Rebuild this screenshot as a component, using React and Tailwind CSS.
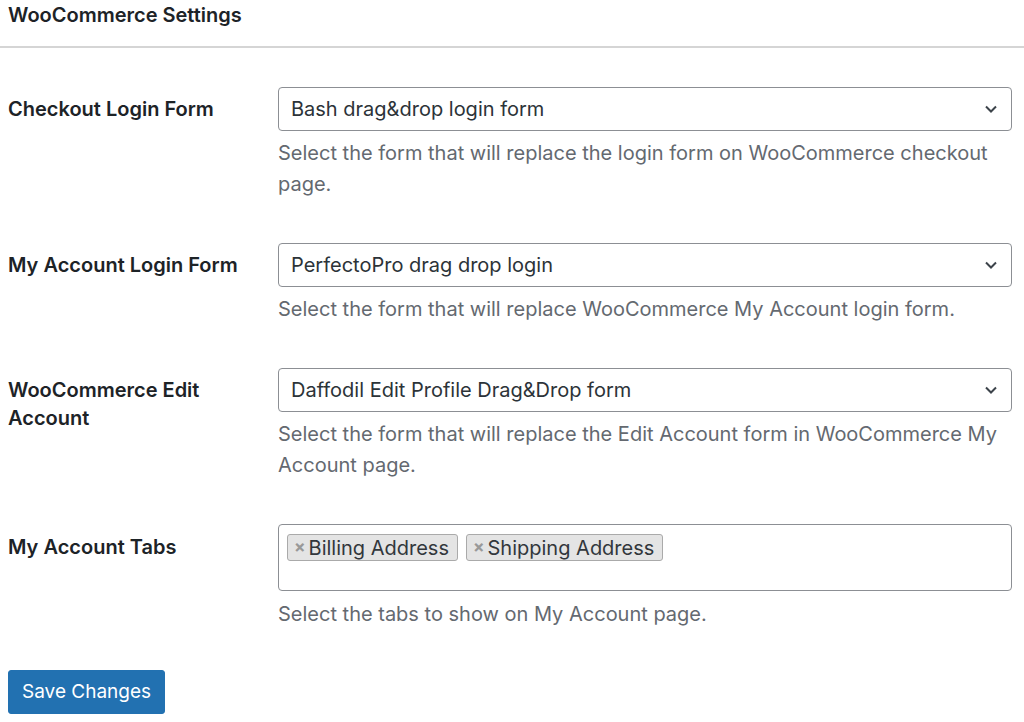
import React from "react";

const font = { fontFamily: 'Inter, "Liberation Sans", Arial, sans-serif' };

const Chevron = () => (
  <svg width="16" height="16" viewBox="0 0 16 16" className="text-[#3c434a]">
    <path d="M3 5.5l5 5 5-5" fill="none" stroke="currentColor" strokeWidth="2" />
  </svg>
);

const Select = ({ value }) => (
  <div className="flex h-[44px] items-center justify-between rounded-[4px] border border-[#8c8f94] bg-white pl-[12px] pr-[12px] text-[20px] text-[#2c3338]">
    <span>{value}</span>
    <Chevron />
  </div>
);

const Desc = ({ children }) => (
  <p className="mt-[7px] text-[20px] leading-[31px] text-[#646970]">{children}</p>
);

const Tag = ({ label }) => (
  <span className="flex h-[27px] items-center rounded-[3px] border border-[#aaaaaa] bg-[#e4e4e4] pl-[6px] pr-[8px] text-[20px] text-[#32373c]">
    <span className="mr-[3px] text-[17px] font-bold text-[#999]">×</span>
    {label}
  </span>
);

const Row = ({ label, children, className = "" }) => (
  <div className={`grid grid-cols-[270px_734px] ${className}`}>
    <div className="pr-2 text-[20px] font-semibold leading-[28px] text-[#1d2327]">{label}</div>
    <div>{children}</div>
  </div>
);

export default function App() {
  return (
    <div className="min-h-[722px] bg-white" style={font}>
      <h2 className="px-2 pt-[3px] text-[20px] font-semibold leading-[25px] text-[#1d2327]">
        WooCommerce Settings
      </h2>
      <div className="mt-[18px] h-[2px] bg-[#d5d5d5]" />

      <div className="pl-2 pt-[39px]">
        <Row label={<div className="pt-[8px]">Checkout Login Form</div>}>
          <Select value="Bash drag&drop login form" />
          <Desc>
            Select the form that will replace the login form on WooCommerce checkout
            <br />
            page.
          </Desc>
        </Row>

        <Row className="mt-[43px]" label={<div className="pt-[8px]">My Account Login Form</div>}>
          <Select value="PerfectoPro drag drop login" />
          <Desc>Select the form that will replace WooCommerce My Account login form.</Desc>
        </Row>

        <Row
          className="mt-[43px]"
          label={
            <div className="pt-[8px]">
              WooCommerce Edit
              <br />
              Account
            </div>
          }
        >
          <Select value="Daffodil Edit Profile Drag&Drop form" />
          <Desc>
            Select the form that will replace the Edit Account form in WooCommerce My
            <br />
            Account page.
          </Desc>
        </Row>

        <Row className="mt-[43px]" label={<div className="pt-[9px]">My Account Tabs</div>}>
          <div className="flex h-[67px] items-start gap-[8px] rounded-[4px] border border-[#8c8f94] bg-white px-[8px] pt-[9px]">
            <Tag label="Billing Address" />
            <Tag label="Shipping Address" />
          </div>
          <Desc>
            <span className="mt-[8px] block">Select the tabs to show on My Account page.</span>
          </Desc>
        </Row>

        <button className="mt-[40px] h-[44px] rounded-[3px] border border-[#2271b1] bg-[#2271b1] px-[13px] text-[19px] text-white">
          Save Changes
        </button>
      </div>
    </div>
  );
}
